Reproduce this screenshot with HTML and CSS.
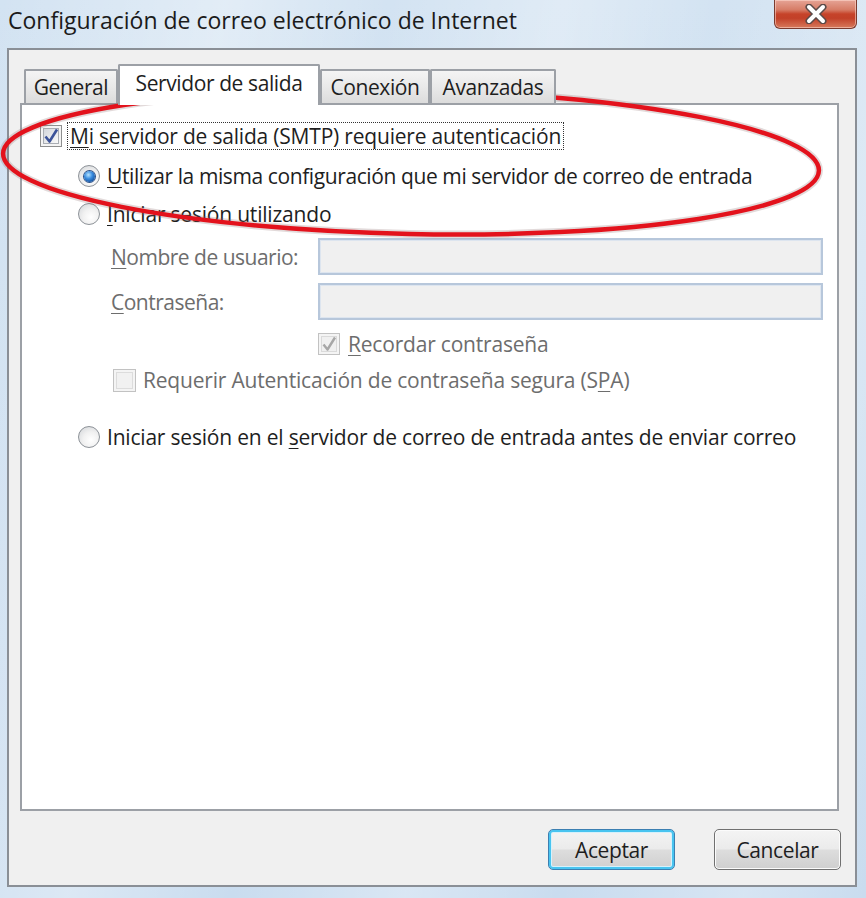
FILE: index.html
```html
<!DOCTYPE html>
<html lang="es">
<head>
<meta charset="utf-8">
<title>Configuración de correo electrónico de Internet</title>
<link rel="stylesheet" href="styles.css">
</head>
<body>
<div class="window">
  <div class="titlebar">
    <span class="title">Configuración de correo electrónico de Internet</span>
    <div class="close" aria-label="Cerrar">
      <svg width="22" height="20" viewBox="0 0 22 20">
        <path d="M4 3 L18 17 M18 3 L4 17" stroke="#5a4a48" stroke-width="7" stroke-linecap="round"/>
        <path d="M4 3 L18 17 M18 3 L4 17" stroke="#ffffff" stroke-width="4" stroke-linecap="round"/>
      </svg>
    </div>
  </div>

  <div class="client">
    <div class="tabs">
      <div class="tab tab-general">General</div>
      <div class="tab tab-active">Servidor de salida</div>
      <div class="tab tab-conexion">Conexión</div>
      <div class="tab tab-avanzadas">Avanzadas</div>
    </div>

    <div class="panel">
      <div class="row row-smtp">
        <span class="cb">
          <svg width="22" height="22" viewBox="0 0 22 22">
            <defs>
              <linearGradient id="cbfill" x1="0" y1="0" x2="1" y2="1">
                <stop offset="0" stop-color="#d2d5da"/>
                <stop offset="1" stop-color="#fbfbfb"/>
              </linearGradient>
            </defs>
            <rect x="0.5" y="0.5" width="21" height="21" fill="#f4f4f4" stroke="#8e8f8f"/>
            <rect x="3.5" y="3.5" width="15" height="15" fill="url(#cbfill)" stroke="#a9adb3"/>
            <path d="M5.5 11.5 L9.5 16.5 L17 4.5" fill="none" stroke="#3c5399" stroke-width="2.6" stroke-linejoin="round"/>
          </svg>
        </span>
        <span class="label focus"><u>M</u>i servidor de salida (SMTP) requiere autenticación</span>
      </div>

      <div class="row row-same">
        <span class="radio radio-on"></span>
        <span class="label"><u>U</u>tilizar la misma configuración que mi servidor de correo de entrada</span>
      </div>

      <div class="row row-login">
        <span class="radio"></span>
        <span class="label"><u>I</u>niciar sesión utilizando</span>
      </div>

      <div class="field row-user">
        <span class="field-label"><u>N</u>ombre de usuario:</span>
        <span class="input"></span>
      </div>

      <div class="field row-pass">
        <span class="field-label"><u>C</u>ontraseña:</span>
        <span class="input"></span>
      </div>

      <div class="row row-remember disabled">
        <span class="cb">
          <svg width="22" height="22" viewBox="0 0 22 22">
            <rect x="0.5" y="0.5" width="21" height="21" fill="#f4f4f4" stroke="#c2c2c2"/>
            <rect x="3.5" y="3.5" width="15" height="15" fill="#f0f0f0" stroke="#dadada"/>
            <path d="M5.5 11.5 L9.5 16.5 L17 4.5" fill="none" stroke="#a7a7a7" stroke-width="2.4" stroke-linejoin="round"/>
          </svg>
        </span>
        <span class="label"><u>R</u>ecordar contraseña</span>
      </div>

      <div class="row row-spa disabled">
        <span class="cb">
          <svg width="23" height="23" viewBox="0 0 23 23">
            <rect x="0.5" y="0.5" width="22" height="22" fill="#f4f4f4" stroke="#c2c2c2"/>
            <rect x="3.5" y="3.5" width="16" height="16" fill="#f1f1f1" stroke="#dcdcdc"/>
          </svg>
        </span>
        <span class="label">Requerir Autenticación de contraseña segura (S<u>P</u>A)</span>
      </div>

      <div class="row row-before">
        <span class="radio"></span>
        <span class="label">Iniciar sesión en el <u>s</u>ervidor de correo de entrada antes de enviar correo</span>
      </div>
    </div>

    <div class="buttons">
      <button class="btn btn-default">Aceptar</button>
      <button class="btn">Cancelar</button>
    </div>
  </div>

  <svg class="annotation" width="866" height="898" viewBox="0 0 866 898">
    <ellipse cx="411" cy="162" rx="408" ry="72" fill="none" stroke="#8a6a6a" stroke-opacity="0.25" stroke-width="8" transform="rotate(1.2 411 162)"/>
    <ellipse cx="411" cy="162" rx="408" ry="72" fill="none" stroke="#e3121c" stroke-width="4.5" transform="rotate(1.2 411 162)"/>
  </svg>
</div>
</body>
</html>
```

FILE: styles.css
```css
* { box-sizing: border-box; }

html, body {
  margin: 0;
  padding: 0;
}

body {
  width: 866px;
  height: 898px;
  overflow: hidden;
  font-family: "Open Sans", "Noto Sans", sans-serif;
  color: #1e1e1e;
}

.window {
  position: relative;
  width: 866px;
  height: 898px;
  display: flex;
  flex-direction: column;
  background:
    linear-gradient(100deg, rgba(255,255,255,0) 0%, rgba(255,255,255,0.35) 22%, rgba(255,255,255,0) 38%, rgba(255,255,255,0.3) 55%, rgba(255,255,255,0) 70%, rgba(255,255,255,0.25) 88%, rgba(255,255,255,0) 100%),
    linear-gradient(180deg, #d3e3f2 0%, #c9dcef 100%);
}

/* Title bar */
.titlebar {
  height: 48px;
  display: flex;
  justify-content: space-between;
  align-items: flex-start;
}

.title {
  margin: 5px 0 0 8px;
  font-size: 23px;
  line-height: 30px;
  letter-spacing: 0;
  color: #1b1b1b;
}

.close {
  width: 83px;
  height: 29px;
  margin-right: 9px;
  display: flex;
  align-items: center;
  justify-content: center;
  border: 1px solid #7a3a2e;
  border-top: none;
  border-radius: 0 0 6px 6px;
  background: linear-gradient(180deg, #e6a496 0%, #d67c66 35%, #c6432a 50%, #c24028 65%, #d77a5c 100%);
  box-shadow: inset 0 0 0 1px rgba(255, 220, 210, 0.55);
}

/* Client area */
.client {
  flex: 1;
  margin: 0 9px 11px 7px;
  border: 2px solid #8a8f96;
  background: #f0f0f0;
  display: flex;
  flex-direction: column;
  padding: 14px 16px 15px 11px;
}

/* Tabs */
.tabs {
  height: 39px;
  display: flex;
  align-items: flex-end;
  padding-left: 4px;
  position: relative;
  z-index: 1;
}

.tab {
  height: 34px;
  border: 2px solid #9ca0a6;
  border-bottom: none;
  border-radius: 2px 2px 0 0;
  background: linear-gradient(180deg, #f4f4f4 0%, #e9e9e9 50%, #dcdcdc 100%);
  font-size: 21px;
  line-height: 30px;
  letter-spacing: -0.4px;
  text-align: center;
  color: #1e1e1e;
  white-space: nowrap;
}

.tab-general { width: 94px; padding-top: 1px; }
.tab-conexion { width: 110px; padding-top: 1px; }
.tab-avanzadas { width: 126px; padding-top: 1px; }

.tab-active {
  width: 202px;
  height: 41px;
  margin-bottom: -2px;
  background: #ffffff;
  line-height: 34px;
}

/* Panel */
.panel {
  flex: 1;
  background: #ffffff;
  border: 2px solid #9ca0a6;
  padding-top: 16px;
  display: flex;
  flex-direction: column;
}

.row {
  height: 30px;
  display: flex;
  align-items: center;
  font-size: 21px;
  letter-spacing: -0.2px;
  white-space: nowrap;
}

.label {
  line-height: 26px;
}

.label u,
.field-label u {
  text-decoration-thickness: 1px;
  text-underline-offset: 3px;
}

.focus {
  margin-left: 6px;
  padding: 0 2px;
  outline: 1px dotted #333333;
  outline-offset: 0;
}

.cb {
  width: 22px;
  height: 22px;
  display: flex;
  flex: none;
}

.radio {
  width: 22px;
  height: 22px;
  flex: none;
  border-radius: 50%;
  border: 1px solid #8d9298;
  background: radial-gradient(circle at 60% 65%, #ffffff 0%, #f1f1f1 45%, #cfd2d6 100%);
  margin-right: 7px;
  display: flex;
  align-items: center;
  justify-content: center;
}

.radio-on::after {
  content: "";
  width: 11px;
  height: 11px;
  border-radius: 50%;
  background: radial-gradient(circle at 40% 35%, #b6e4ff 0%, #3a8de0 40%, #124f9e 80%, #0d3b78 100%);
  box-shadow: 0 0 0 1px #2a4f86;
}

.row-smtp { margin-left: 18px; }
.row-same { margin-left: 56px; margin-top: 10px; letter-spacing: -0.4px; }
.row-login { margin-left: 56px; margin-top: 8px; }

.field {
  height: 37px;
  display: flex;
  align-items: center;
  margin-left: 89px;
  margin-right: 14px;
  font-size: 21px;
  letter-spacing: -0.5px;
  color: #6d6d6d;
  white-space: nowrap;
}

.row-user { margin-top: 9px; }
.row-pass { margin-top: 8px; }

.field-label {
  width: 207px;
  flex: none;
}

.input {
  flex: 1;
  height: 37px;
  background: #f0f0f0;
  border: 2px solid #b7c7db;
  box-shadow: inset 0 0 0 1px #dde5ef;
}

.disabled { color: #6d6d6d; }

.row-remember { margin-left: 296px; margin-top: 9px; }
.row-remember .label { margin-left: 8px; }

.row-spa { margin-left: 91px; margin-top: 6px; }
.row-spa .cb { width: 23px; height: 23px; }
.row-spa .label { margin-left: 7px; }

.row-before { margin-left: 56px; margin-top: 27px; }

/* Buttons */
.buttons {
  display: flex;
  justify-content: flex-end;
  gap: 39px;
  margin-top: 18px;
  margin-right: -2px;
}

.btn {
  width: 127px;
  height: 41px;
  border: 1px solid #707070;
  border-radius: 5px;
  background: linear-gradient(180deg, #f4f4f4 0%, #ebebeb 48%, #dddddd 52%, #cfcfcf 100%);
  box-shadow: inset 0 0 0 1px #fbfbfb;
  font-family: "Open Sans", "Noto Sans", sans-serif;
  font-size: 21px;
  letter-spacing: -0.4px;
  color: #1e1e1e;
  padding: 0;
}

.btn-default {
  border: 1px solid #3c7fb1;
  box-shadow: inset 0 0 0 2px #48c4f0, inset 0 0 0 3px #d6f1fb;
}

/* Annotation overlay */
.annotation {
  position: absolute;
  left: 0;
  top: 0;
  pointer-events: none;
}
```
